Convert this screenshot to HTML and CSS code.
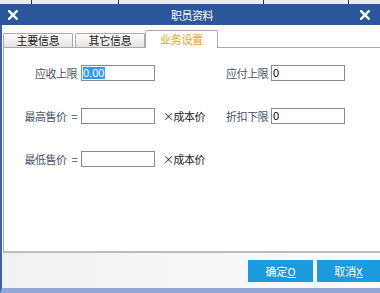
FILE: index.html
```html
<!DOCTYPE html>
<html lang="zh-CN">
<head>
    <meta charset="UTF-8">
    <meta name="viewport" content="width=device-width, initial-scale=1.0">
    <title>职员资料</title>
    <link rel="stylesheet" href="styles.css">
</head>
<body>

    <!-- strip of the window behind -->
    <div class="back-strip">
        <span class="seg seg-1"></span>
        <span class="seg seg-2"></span>
        <span class="seg seg-3"></span>
        <span class="seg seg-4"></span>
    </div>

    <div class="dialog">
        <div class="title-bar">
            <svg class="close" width="10" height="10" viewBox="0 0 10 10">
                <path d="M1 1 L9 9 M9 1 L1 9" stroke="#fff" stroke-width="2.4" stroke-linecap="square"/>
            </svg>
            <span class="title">职员资料</span>
            <svg class="close" width="10" height="10" viewBox="0 0 10 10">
                <path d="M1 1 L9 9 M9 1 L1 9" stroke="#fff" stroke-width="2.4" stroke-linecap="square"/>
            </svg>
        </div>

        <div class="dialog-body">
            <div class="tabs">
                <div class="tab">主要信息</div>
                <div class="tab">其它信息</div>
                <div class="tab active">业务设置</div>
            </div>

            <div class="tab-panel">
                <div class="form-row">
                    <div class="cell-left">
                        <label class="label">应收上限</label>
                        <div class="field"><span class="selected">0.00</span></div>
                    </div>
                    <div class="cell-right">
                        <label class="label">应付上限</label>
                        <div class="field">0</div>
                    </div>
                </div>

                <div class="form-row">
                    <div class="cell-left">
                        <label class="label">最高售价<span class="eq">=</span></label>
                        <div class="field"></div>
                        <span class="suffix">×成本价</span>
                    </div>
                    <div class="cell-right">
                        <label class="label">折扣下限</label>
                        <div class="field">0</div>
                    </div>
                </div>

                <div class="form-row">
                    <div class="cell-left">
                        <label class="label">最低售价<span class="eq">=</span></label>
                        <div class="field"></div>
                        <span class="suffix">×成本价</span>
                    </div>
                </div>
            </div>

            <div class="footer">
                <button class="btn">确定<u>O</u></button>
                <button class="btn">取消<u>X</u></button>
            </div>
        </div>
    </div>

</body>
</html>
```

FILE: styles.css
```css
body {
    margin: 0;
    width: 380px;
    height: 293px;
    overflow: hidden;
    font-family: "Noto Sans CJK SC", "Liberation Sans", sans-serif;
    font-size: 11px;
    background: #ffffff;
}

.back-strip {
    display: flex;
    height: 4px;
    background: #ebebeb;
}

.seg {
    border-right: 1px solid #333;
}

.seg-1 { width: 31px; }
.seg-2 { width: 86px; }
.seg-3 { width: 144px; }
.seg-4 { width: 84px; }

.dialog {
    border-left: 2px solid #3a62a8;
    height: 289px;
    display: flex;
    flex-direction: column;
    box-sizing: border-box;
    border-bottom: 5px solid #93a7d8;
}

.title-bar {
    height: 21px;
    background: #2b579a;
    color: #fff;
    display: flex;
    align-items: center;
    justify-content: space-between;
    padding: 0 10px 0 8px;
    margin-left: -2px;
}

.title {
    font-size: 11px;
    letter-spacing: -0.5px;
    margin-left: 6px;
}

.close {
    display: block;
}

.dialog-body {
    flex: 1;
    display: flex;
    flex-direction: column;
    background: #fff;
}

.tabs {
    display: flex;
    align-items: flex-end;
    gap: 2px;
    padding: 4px 0 0 1px;
    height: 18px;
}

.tab {
    width: 68px;
    height: 13px;
    line-height: 13px;
    text-align: center;
    color: #1a1a1a;
    border: 1px solid #a9a9a9;
    border-bottom: none;
    border-radius: 2px 2px 0 0;
    background: linear-gradient(#fdfdfd, #e4e4e4);
    letter-spacing: -0.3px;
}

.tab.active {
    width: 71px;
    height: 17px;
    line-height: 16px;
    background: #fff;
    color: #f0a020;
    margin-left: -2px;
    margin-bottom: -1px;
    position: relative;
}

.tab-panel {
    margin-left: 1px;
    height: 206px;
    border-top: 1px solid #a9a9a9;
    border-left: 1px solid #a9a9a9;
    border-bottom: 2px solid #bdbdbd;
    box-sizing: border-box;
    padding-top: 17px;
    display: flex;
    flex-direction: column;
    gap: 27px;
}

.form-row {
    display: flex;
    height: 16px;
    align-items: center;
}

.cell-left {
    width: 206px;
    display: flex;
    align-items: center;
}

.cell-right {
    display: flex;
    align-items: center;
}

.label {
    color: #46536a;
    text-align: right;
    white-space: nowrap;
    letter-spacing: -0.5px;
}

.eq {
    margin-left: 5px;
}

.cell-left .label {
    width: 73px;
    margin-right: 4px;
}

.cell-right .label {
    width: 58px;
    margin-right: 3px;
}

.field {
    width: 71px;
    height: 14px;
    border: 1px solid #8a8a8a;
    background: #fff;
    font-family: "Liberation Sans", sans-serif;
    font-size: 11px;
    line-height: 14px;
    padding-left: 1px;
    color: #000;
}

.selected {
    background: #3399ff;
    color: #fff;
    padding-right: 1px;
}

.suffix {
    margin-left: 8px;
    color: #222;
    white-space: nowrap;
    letter-spacing: -0.5px;
}

.footer {
    flex: 1;
    display: flex;
    justify-content: flex-end;
    align-items: flex-start;
    gap: 4px;
    padding-top: 7px;
    background: linear-gradient(90deg, #f1f1f1, #fbfbfb);
}

.btn {
    width: 65px;
    height: 22px;
    border: none;
    background: #1b9ade;
    color: #fff;
    font-family: "Noto Sans CJK SC", "Liberation Sans", sans-serif;
    font-size: 11px;
    padding: 0;
}

.btn + .btn {
    width: 63px;
}
```
